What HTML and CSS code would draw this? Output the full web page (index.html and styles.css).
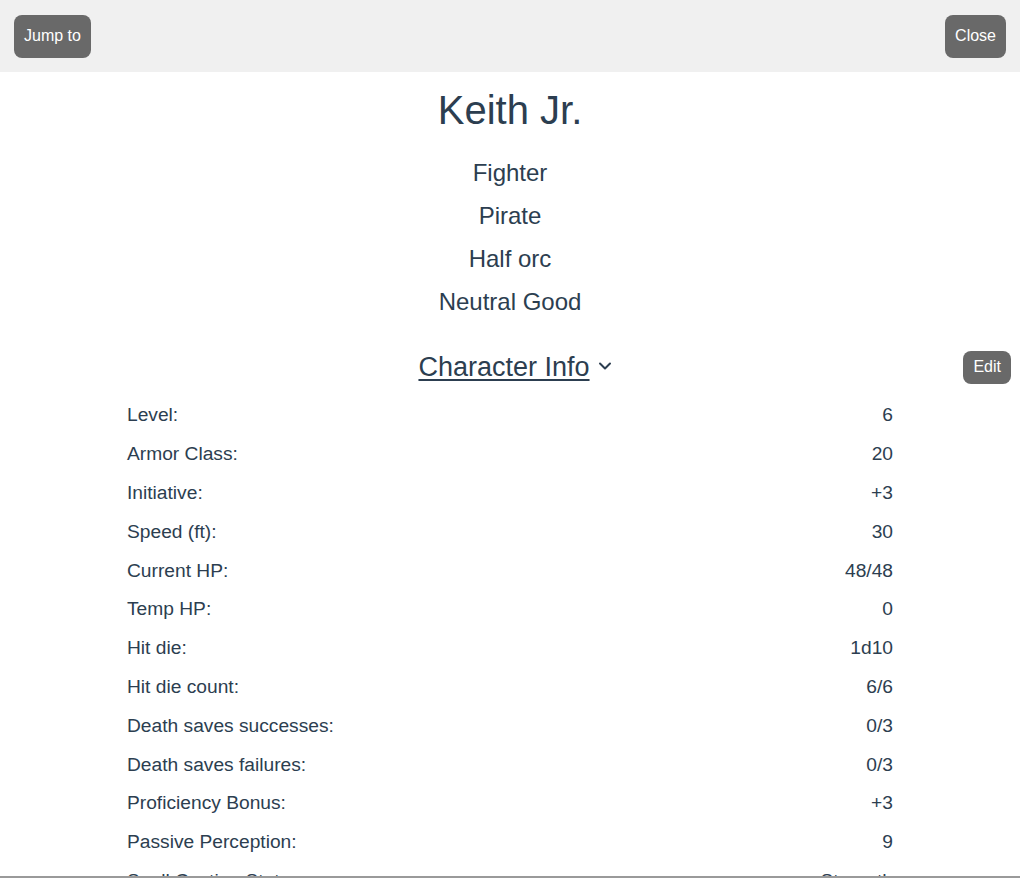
FILE: index.html
```html
<!DOCTYPE html>
<html>
<head>
<meta charset="utf-8">
<title>Keith Jr.</title>
<link rel="stylesheet" href="styles.css">
</head>
<body>
<div class="frame">
  <header class="topbar">
    <button class="btn btn-lg">Jump to</button>
    <button class="btn btn-lg">Close</button>
  </header>
  <main class="sheet">
    <h1 class="name">Keith Jr.</h1>
    <div class="subs">
      <div class="sub">Fighter</div>
      <div class="sub">Pirate</div>
      <div class="sub">Half orc</div>
      <div class="sub">Neutral Good</div>
    </div>
    <div class="section-head">
      <span></span>
      <h2 class="section-title"><span class="section-link">Character Info</span><svg class="chev" width="14" height="10" viewBox="0 0 14 10"><path d="M2 2.5 L7 7.5 L12 2.5" fill="none" stroke="#2c3e50" stroke-width="2" stroke-linecap="round" stroke-linejoin="round"/></svg></h2>
      <button class="btn btn-sm">Edit</button>
    </div>
    <div class="rows">
      <div class="row"><span>Level:</span><span>6</span></div>
      <div class="row"><span>Armor Class:</span><span>20</span></div>
      <div class="row"><span>Initiative:</span><span>+3</span></div>
      <div class="row"><span>Speed (ft):</span><span>30</span></div>
      <div class="row"><span>Current HP:</span><span>48/48</span></div>
      <div class="row"><span>Temp HP:</span><span>0</span></div>
      <div class="row"><span>Hit die:</span><span>1d10</span></div>
      <div class="row"><span>Hit die count:</span><span>6/6</span></div>
      <div class="row"><span>Death saves successes:</span><span>0/3</span></div>
      <div class="row"><span>Death saves failures:</span><span>0/3</span></div>
      <div class="row"><span>Proficiency Bonus:</span><span>+3</span></div>
      <div class="row"><span>Passive Perception:</span><span>9</span></div>
      <div class="row"><span>Spell Casting Stat:</span><span>Strength</span></div>
      <div class="row"><span>Spell Save DC:</span><span>13</span></div>
    </div>
  </main>
</div>
</body>
</html>
```

FILE: styles.css
```css
* { box-sizing: border-box; }
html, body { margin: 0; padding: 0; }
body {
  font-family: "Liberation Sans", Arial, sans-serif;
  color: #2c3e50;
  background: #ffffff;
}
.frame {
  height: 878px;
  overflow: hidden;
  border-bottom: 2px solid #9a9a9a;
}
.topbar {
  height: 72px;
  background: #f0f0f0;
  display: flex;
  justify-content: space-between;
  align-items: center;
  padding: 0 14px;
}
.btn {
  font-family: "Liberation Sans", Arial, sans-serif;
  background: #696969;
  color: #ffffff;
  border: none;
  border-radius: 8px;
  font-size: 16px;
  line-height: 18px;
  padding: 0 10px;
  cursor: pointer;
}
.btn-lg { height: 43px; }
.btn-sm { height: 33px; justify-self: end; margin-right: 9px; }
.sheet { text-align: center; }
.name {
  font-size: 40px;
  font-weight: normal;
  margin: 0;
  padding-top: 16px;
  line-height: 44px;
}
.subs { padding-top: 19px; }
.sub {
  font-size: 24px;
  line-height: 43px;
}
.section-head {
  display: grid;
  grid-template-columns: 1fr auto 1fr;
  align-items: center;
  margin-top: 26px;
  height: 36px;
}
.section-title {
  margin: 0;
  font-size: 27px;
  font-weight: normal;
  line-height: 32px;
  display: flex;
  align-items: center;
  gap: 8px;
  padding-left: 10px;
}
.section-link { text-decoration: underline; text-underline-offset: 3px; text-decoration-thickness: 2px; }
.chev { display: block; margin-top: -2px; }
.rows {
  width: 766px;
  margin: 11px auto 0;
}
.row {
  display: flex;
  justify-content: space-between;
  align-items: center;
  height: 38.8px;
  font-size: 19.2px;
}
```
